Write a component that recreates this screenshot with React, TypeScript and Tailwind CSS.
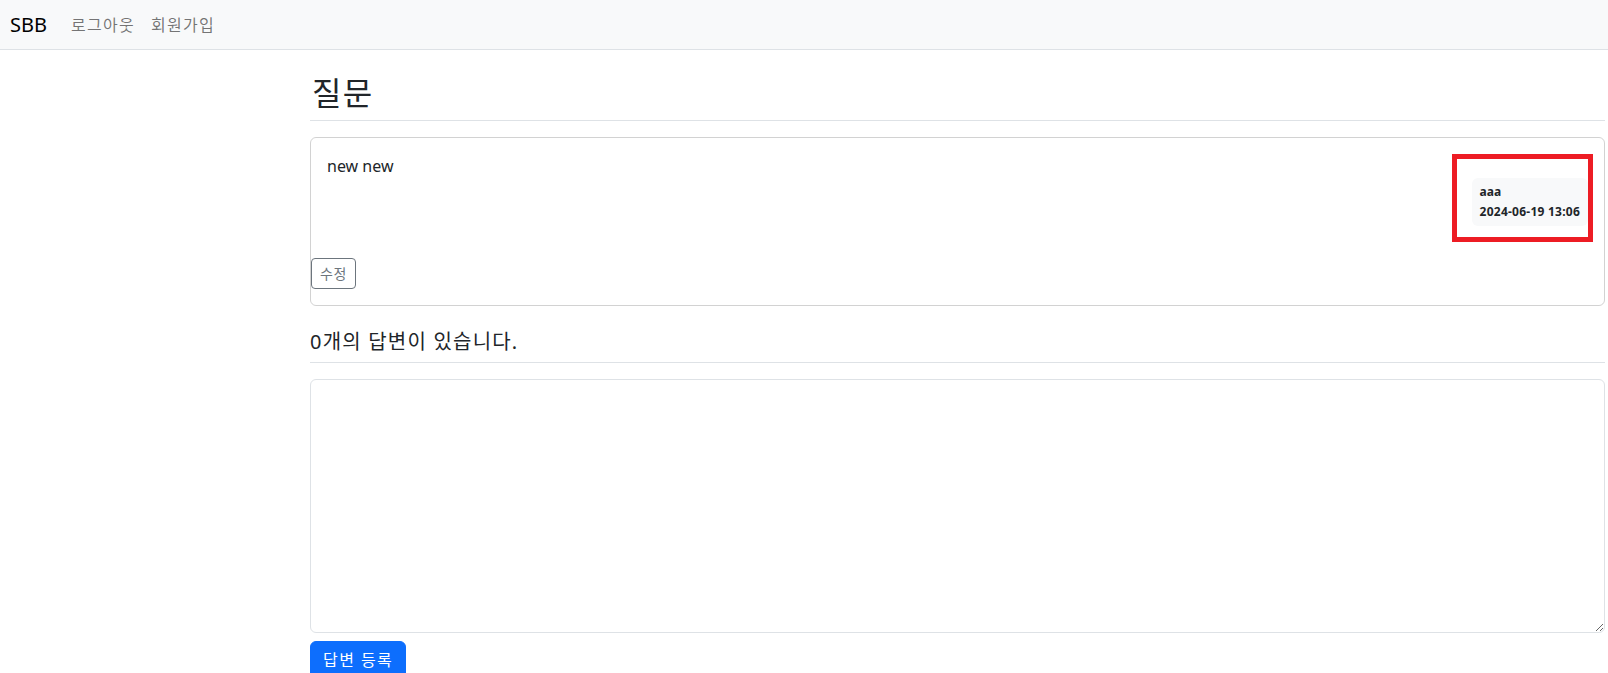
const font = { fontFamily: '"Noto Sans", "Noto Sans CJK KR", sans-serif' }

function Navbar() {
  return (
    <nav className="flex h-[50px] items-center border-b border-[#dee2e6] bg-[#f8f9fa] pl-[10px]">
      <a className="mr-4 text-[20px] leading-[30px] text-black">SBB</a>
      <ul className="flex">
        <li>
          <a className="block px-2 text-base leading-6 tracking-[0.08em] text-[rgba(0,0,0,0.55)]">로그아웃</a>
        </li>
        <li>
          <a className="block px-2 text-base leading-6 tracking-[0.08em] text-[rgba(0,0,0,0.55)]">회원가입</a>
        </li>
      </ul>
    </nav>
  )
}

export default function App() {
  return (
    <div className="min-h-screen bg-white text-base leading-6 text-[#212529]" style={font}>
      <Navbar />
      <div className="pl-[310px] pr-[3px]">
        <h2 className="mt-4 border-b border-[#dee2e6] py-2 pl-[2px] text-[32px] leading-[38px] font-normal tracking-[0.04em]">
          질문
        </h2>

        <div className="mt-4 rounded-md border border-[rgba(0,0,0,0.175)]">
          <div className="p-4">
            <div className="whitespace-pre-line">new new</div>
            <div className="flex justify-end">
              <div className="relative">
                <div className="rounded-md bg-[#f8f9fa] p-2 text-left text-xs leading-3 font-bold text-[#212529]">
                  <div className="mb-2">aaa</div>
                  <div className="tracking-[0.02em]">2024-06-19 13:06</div>
                </div>
                <div className="pointer-events-none absolute -top-[24px] -right-[5px] -bottom-[16px] -left-[20px] border-[5px] border-[#ed1c24]" />
              </div>
            </div>
          </div>
          <div className="my-4">
            <button className="rounded border border-[#6c757d] px-2 py-1 text-sm leading-[21px] tracking-[0.04em] text-[#6c757d]">
              수정
            </button>
          </div>
        </div>

        <h5 className="my-4 border-b border-[#dee2e6] py-2 text-[20px] leading-6 font-normal tracking-[0.06em]">
          0개의 답변이 있습니다.
        </h5>

        <form className="my-4">
          <textarea
            rows={10}
            className="block h-[254px] w-full resize-y rounded-md border border-[#dee2e6] px-3 py-1.5 text-base leading-6 outline-none"
          />
          <button
            type="button"
            className="my-2 rounded-md border border-[#0d6efd] bg-[#0d6efd] px-3 py-1.5 text-base leading-6 tracking-[0.09em] text-white"
          >
            답변 등록
          </button>
        </form>
      </div>
    </div>
  )
}
